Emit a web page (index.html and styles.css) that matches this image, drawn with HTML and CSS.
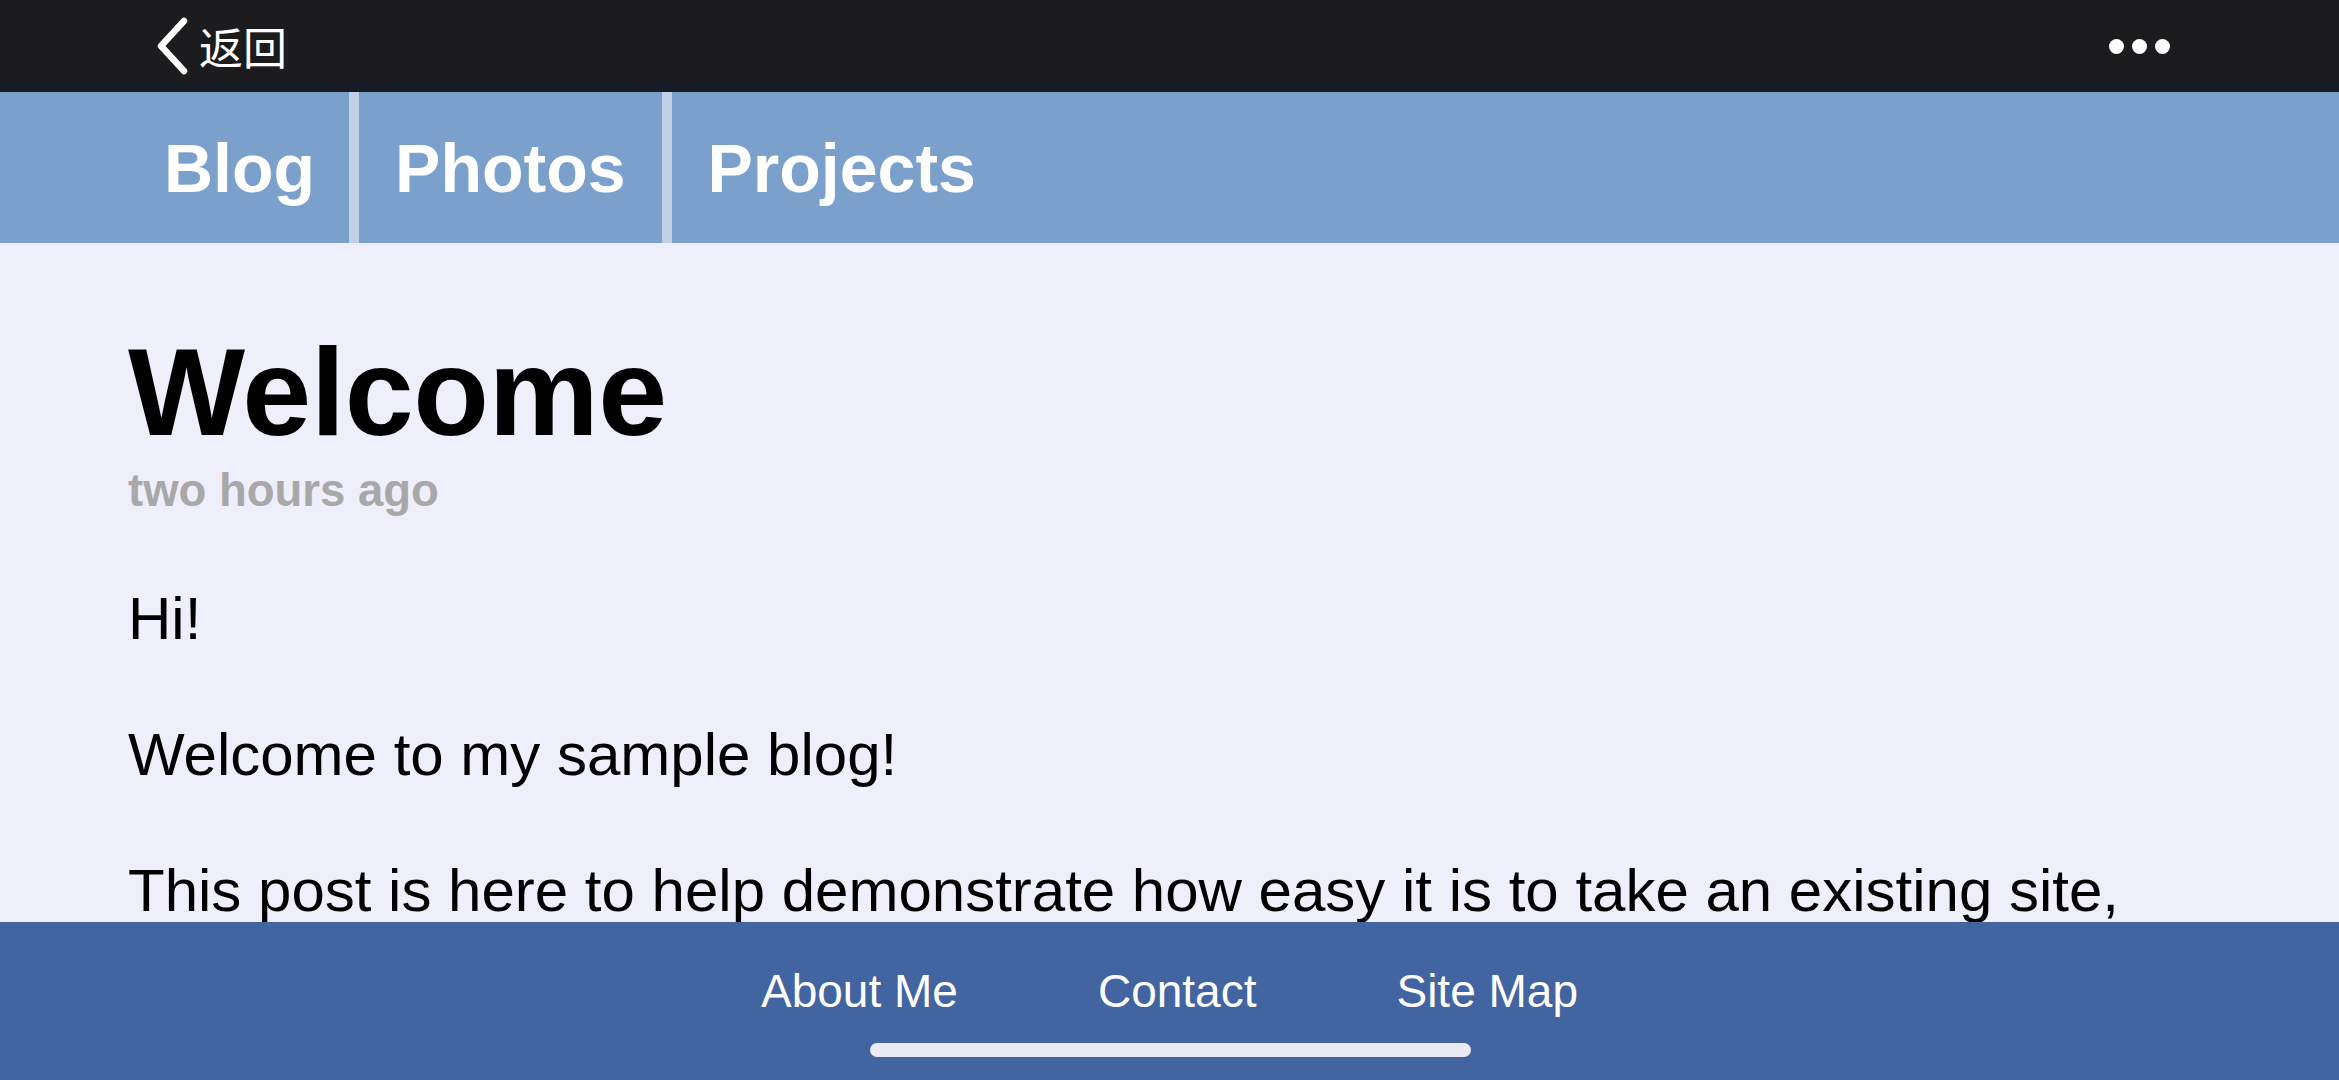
FILE: index.html
```html
<!DOCTYPE html>
<html lang="en">
<head>
<meta charset="UTF-8">
<meta name="viewport" content="width=device-width, initial-scale=1.0">
<title>Welcome</title>
<link rel="stylesheet" href="styles.css">
</head>
<body>
<div class="topbar">
  <a class="back" href="#">
    <svg class="chevron" width="32" height="58" viewBox="0 0 32 58">
      <polyline points="28,4 5,29 28,54" fill="none" stroke="#fff" stroke-width="6.5" stroke-linecap="round" stroke-linejoin="round"/>
    </svg>
    <span>返回</span>
  </a>
  <div class="more">
    <span></span><span></span><span></span>
  </div>
</div>

<nav class="menu">
  <a href="#">Blog</a>
  <a href="#">Photos</a>
  <a href="#">Projects</a>
</nav>

<div class="content">
  <h1>Welcome</h1>
  <div class="meta">two hours ago</div>
  <p>Hi!</p>
  <p>Welcome to my sample blog!</p>
  <p>This post is here to help demonstrate how easy it is to take an existing site,</p>
</div>

<div class="footer">
  <a href="#">About Me</a>
  <a href="#">Contact</a>
  <a href="#">Site Map</a>
  <div class="home-bar"></div>
</div>
</body>
</html>
```

FILE: styles.css
```css
/* page */

body {
    font-family: 'Liberation Sans', Arial, sans-serif;
    background-color: #efeefb;
    margin: 0;
    padding: 0;
    height: 1080px;
    overflow: hidden;
}

a {
    color: #fff;
    text-decoration: none;
}

/* top bar */

.topbar {
    height: 82px;
    background-color: #1c1c1e;
    border-bottom: 10px solid #161b26;
    display: flex;
    align-items: center;
    justify-content: space-between;
    padding: 0 169px 0 156px;
}

.back {
    display: flex;
    align-items: center;
    gap: 11px;
    margin-top: 10px;
    font-family: 'Noto Sans CJK SC', sans-serif;
    font-size: 44px;
    line-height: 58px;
}

.more {
    display: flex;
    gap: 8px;
    margin-top: 10px;
}

.more span {
    width: 15px;
    height: 15px;
    border-radius: 50%;
    background-color: #fff;
}

/* menu */

.menu {
    height: 151px;
    background-color: #7ba0cc;
    display: flex;
    padding-left: 128px;
}

.menu a {
    display: flex;
    align-items: center;
    padding: 0 36px;
    font-size: 68px;
    font-weight: bold;
}

.menu a:first-child {
    padding-right: 34px;
}

.menu a + a {
    border-left: 10px solid #c2d0e7;
}

/* article */

.content {
    padding: 84px 128px 0 128px;
    color: #000;
}

h1 {
    margin: 0;
    font-size: 124px;
    line-height: 130px;
    letter-spacing: -0.5px;
}

.meta {
    margin: 7px 0 63px 0;
    font-size: 45.5px;
    line-height: 54px;
    font-weight: bold;
    color: #a8a8a8;
}

p {
    margin: 60px 0;
    font-size: 60px;
    line-height: 76px;
    white-space: nowrap;
}

/* footer */

.footer {
    position: fixed;
    left: 0;
    right: 0;
    bottom: 0;
    height: 116px;
    padding-top: 42px;
    background-color: #4264a0;
    display: flex;
    justify-content: center;
    gap: 140px;
    font-size: 46px;
    line-height: 54px;
}

.home-bar {
    position: absolute;
    left: 50%;
    bottom: 23px;
    width: 601px;
    height: 14px;
    margin-left: -300px;
    border-radius: 7px;
    background-color: #ebe9f2;
}
```
